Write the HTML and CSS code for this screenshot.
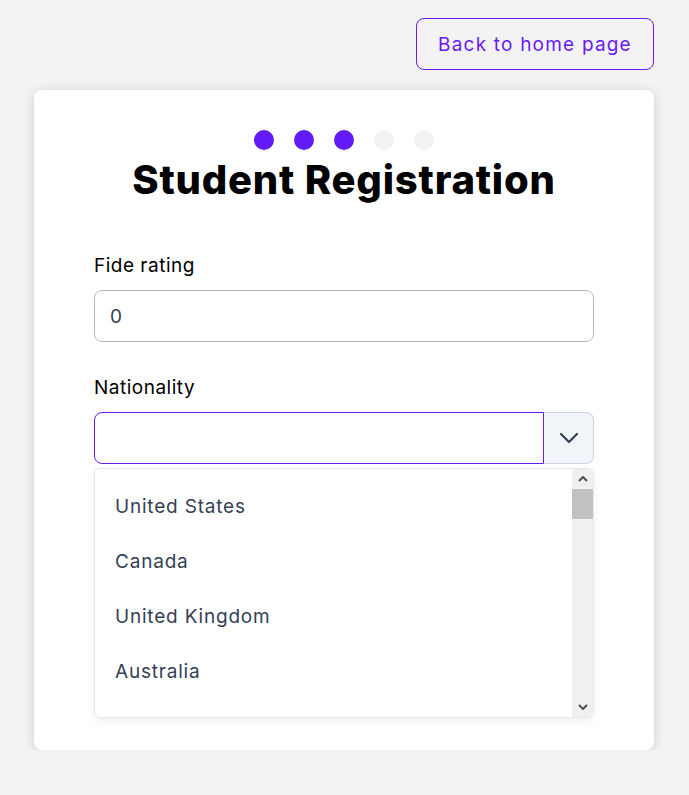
FILE: index.html
```html
<!DOCTYPE html>
<html lang="en">
<head>
<meta charset="utf-8">
<title>Student Registration</title>
<link rel="stylesheet" href="styles.css">
</head>
<body>
<div class="page">
  <div class="top">
    <button class="back-btn">Back to home page</button>
  </div>
  <div class="card">
    <div class="steps">
      <span class="dot active"></span>
      <span class="dot active"></span>
      <span class="dot active"></span>
      <span class="dot"></span>
      <span class="dot"></span>
    </div>
    <h1 class="title">Student Registration</h1>

    <div class="field field-fide">
      <label class="label">Fide rating</label>
      <div class="input">0</div>
    </div>

    <div class="field field-nat">
      <label class="label">Nationality</label>
      <div class="select">
        <div class="select-input"></div>
        <div class="select-btn">
          <svg width="20" height="12" viewBox="0 0 20 12"><path d="M2 2 L10 10 L18 2" fill="none" stroke="#334155" stroke-width="2.2" stroke-linecap="round" stroke-linejoin="round"/></svg>
        </div>
      </div>
      <div class="dropdown">
        <ul class="options">
          <li>United States</li>
          <li>Canada</li>
          <li>United Kingdom</li>
          <li>Australia</li>
        </ul>
        <div class="scrollbar">
          <div class="sb-arrow">
            <svg width="10" height="6" viewBox="0 0 10 6"><path d="M1 5 L5 1 L9 5" fill="none" stroke="#505050" stroke-width="2"/></svg>
          </div>
          <div class="sb-track">
            <div class="sb-thumb"></div>
          </div>
          <div class="sb-arrow">
            <svg width="10" height="6" viewBox="0 0 10 6"><path d="M1 1 L5 5 L9 1" fill="none" stroke="#505050" stroke-width="2"/></svg>
          </div>
        </div>
      </div>
    </div>
  </div>
</div>
</body>
</html>
```
FILE: styles.css
```css
* { box-sizing: border-box; }
html, body { margin: 0; padding: 0; }
body {
  background: #f3f3f3;
  font-family: "Inter", "Noto Sans", sans-serif;
  color: #000;
}
.page {
  padding: 18px 35px 0 34px;
  display: flex;
  flex-direction: column;
}
.top {
  display: flex;
  justify-content: flex-end;
}
.back-btn {
  width: 238px;
  height: 52px;
  background: transparent;
  border: 1px solid #6a1bf5;
  border-radius: 8px;
  color: #6a1bf5;
  font-family: inherit;
  font-size: 19px;
  letter-spacing: 1.2px;
  padding: 0;
}
.card {
  margin-top: 20px;
  width: 620px;
  height: 660px;
  background: #fff;
  border-radius: 8px;
  box-shadow: 0 2px 12px rgba(0,0,0,0.16);
  padding: 40px 60px 0;
}
.steps {
  display: flex;
  justify-content: center;
  gap: 20px;
}
.dot {
  width: 20px;
  height: 20px;
  border-radius: 50%;
  background: #f2f2f2;
}
.dot.active { background: #6119f5; }
.title {
  margin: 0;
  text-align: center;
  font-size: 40px;
  font-weight: 800;
  line-height: 60px;
  letter-spacing: 0.8px;
}
.field { display: flex; flex-direction: column; }
.field-fide { margin-top: 43px; }
.label {
  font-size: 19px;
  letter-spacing: 0.5px;
  line-height: 26px;
  height: 26px;
  margin-bottom: 11px;
}
.input {
  height: 52px;
  border: 1px solid #b8b8b8;
  border-radius: 8px;
  padding: 0 15px;
  display: flex;
  align-items: center;
  font-size: 19px;
  color: #334155;
}
.field-nat { margin-top: 33px; }
.select {
  display: flex;
  height: 52px;
}
.select-input {
  flex: 1;
  border: 1px solid #6a1bf5;
  border-radius: 8px 0 0 8px;
}
.select-btn {
  width: 50px;
  background: #f1f5f9;
  border: 1px solid #cbd5e1;
  border-left: none;
  border-radius: 0 8px 8px 0;
  display: flex;
  align-items: center;
  justify-content: center;
}
.dropdown {
  margin-top: 4px;
  height: 250px;
  background: #fff;
  border: 1px solid #e2e8f0;
  border-radius: 6px;
  box-shadow: 0 4px 10px rgba(0,0,0,0.06);
  display: flex;
  overflow: hidden;
}
.options {
  flex: 1;
  list-style: none;
  margin: 0;
  padding: 10px 0 0;
}
.options li {
  height: 55px;
  display: flex;
  align-items: center;
  padding-left: 20px;
  font-size: 19px;
  letter-spacing: 0.8px;
  color: #334155;
}
.scrollbar {
  width: 21px;
  background: #f0f0f0;
  display: flex;
  flex-direction: column;
}
.sb-arrow {
  height: 20px;
  display: flex;
  align-items: center;
  justify-content: center;
}
.sb-track {
  flex: 1;
}
.sb-thumb {
  height: 30px;
  background: #c1c1c1;
}
```
